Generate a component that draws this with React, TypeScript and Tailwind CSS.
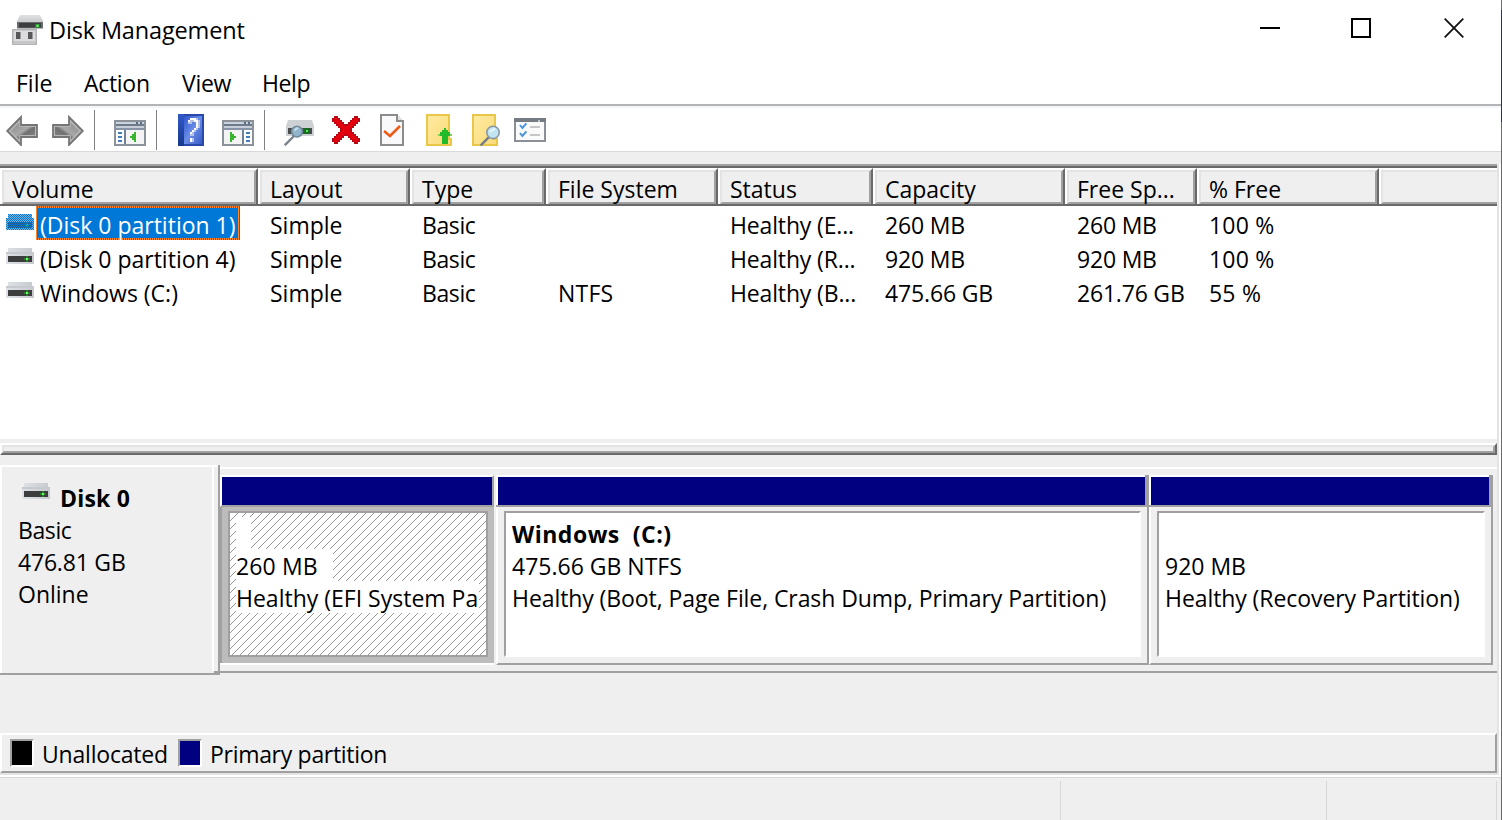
import React from "react";

type Children = { children?: React.ReactNode };

function Glyph({ children }: Children) {
  return (
    <svg viewBox="0 0 16 16" className="block size-8 shrink-0" shapeRendering="crispEdges">
      {children}
    </svg>
  );
}

function AppIcon() {
  return (
    <svg viewBox="0 0 32 32" className="block size-8 shrink-0">
      <defs>
        <linearGradient id="appTop" x1="0" y1="0" x2="0" y2="1">
          <stop offset="0" stopColor="#e0e1e3" />
          <stop offset="1" stopColor="#b9babd" />
        </linearGradient>
      </defs>
      <path d="M8 1H28L31 7V14H5V7Z" fill="url(#appTop)" />
      <rect x="5" y="8" width="26" height="6.5" fill="#6a6c6e" />
      <rect x="7" y="9" width="22" height="4.5" fill="#3b3d3e" />
      <rect x="23.5" y="10" width="4" height="3.5" fill="#2da334" />
      <rect x="24.5" y="11" width="2" height="2" fill="#6cf062" />
      <rect x="0" y="15" width="25" height="16" fill="#b4b4b6" />
      <rect x="1.5" y="16.5" width="22" height="11" fill="#dcdcdf" />
      <rect x="1.5" y="27.5" width="22" height="2.5" fill="#c6c6c9" />
      <rect x="4" y="18" width="4.5" height="7" fill="#58585a" />
      <rect x="16" y="18" width="4.5" height="7" fill="#58585a" />
    </svg>
  );
}

function DriveIcon({ selected = false }: { selected?: boolean }) {
  return (
    <svg viewBox="0 0 28 16" className="block h-4 w-7 shrink-0" shapeRendering="crispEdges">
      <defs>
        <linearGradient id="driveTop">
          <stop offset="0" stopColor="#dee1e5" />
          <stop offset="1" stopColor="#c6c9cd" />
        </linearGradient>
        <pattern id="driveDither" width="2" height="2" patternUnits="userSpaceOnUse">
          <rect width="1" height="1" fill="#0078d7" />
          <rect x="1" y="1" width="1" height="1" fill="#0078d7" />
        </pattern>
      </defs>
      <path d="M2 0H26V4H28V16H0V4H2Z" fill="url(#driveTop)" />
      <rect y="4" width="28" height="2" fill="#c6c9cd" />
      <rect x="2" y="8" width="24" height="6" fill="#3d3d3d" />
      <path d="M18 10H24V12H18ZM20 8H22V14H20Z" fill="#247d27" />
      <rect x="20" y="10" width="2" height="2" fill="#68ff60" />
      {selected && <path d="M2 0H26V4H28V16H0V4H2Z" fill="#0084ea" fillOpacity=".4" />}
      {selected && <path d="M2 0H26V4H28V16H0V4H2Z" fill="url(#driveDither)" />}
    </svg>
  );
}

function ArrowIcon({ forward = false }: { forward?: boolean }) {
  return (
    <svg viewBox="0 0 16 16" className="block size-8 shrink-0">
      <defs>
        <linearGradient id="arrowFill" x1="0" y1="0" x2="1" y2="1">
          <stop offset="0" stopColor="#8b8b8b" />
          <stop offset=".5" stopColor="#a8a8a8" />
          <stop offset=".62" stopColor="#707070" />
          <stop offset="1" stopColor="#8a8a8a" />
        </linearGradient>
      </defs>
      <g transform={forward ? "translate(16 0) scale(-1 1)" : undefined}>
        <path d="M.6 8.5L7.5 1.5V5.5H15.5V11.5H7.5V15.5Z" fill="#b6b6b6" stroke="#757575" strokeWidth=".9" />
        <path d="M2.5 8.5L6.6 4.3V6.5H14.5V10.5H6.6V12.7Z" fill="url(#arrowFill)" />
      </g>
    </svg>
  );
}

function ConsoleIcon({ right = false }: { right?: boolean }) {
  return (
    <Glyph>
      <rect y="3" width="16" height="13" fill="#8b929a" />
      <rect x="1" y="4" width="14" height="1" fill="#cbd3dd" />
      <path d="M1 5H15V6H1Z" fill="#6f7b8a" />
      <path d="M11 4H12V5H11ZM13 4H14V5H13Z" fill="#586b87" />
      <rect x="1" y="6" width="14" height="1" fill="#c5ced9" />
      <rect x="1" y="7" width="14" height="1" fill="#8694a5" />
      {right ? (
        <>
          <rect x="1" y="8" width="9" height="7" fill="#f4f4f4" />
          <rect x="10" y="8" width="1" height="7" fill="#718199" />
          <rect x="11" y="8" width="4" height="7" fill="#fff" />
          <path d="M12 9H14V10H12ZM12 11H14V12H12ZM12 13H14V14H12Z" fill="#3f7fbd" />
          <path d="M4 9H5V10H6V11H7V12H6V13H5V14H4Z" fill="#36b72d" />
        </>
      ) : (
        <>
          <rect x="1" y="8" width="4" height="7" fill="#fff" />
          <path d="M2 9H4V10H2ZM2 11H4V12H2ZM2 13H4V14H2Z" fill="#3f7fbd" />
          <rect x="5" y="8" width="1" height="7" fill="#718199" />
          <rect x="6" y="8" width="9" height="7" fill="#f4f4f4" />
          <path d="M10 9H11V14H10V13H9V12H8V11H9V10H10Z" fill="#36b72d" />
        </>
      )}
    </Glyph>
  );
}

function HelpIcon() {
  return (
    <Glyph>
      <defs>
        <linearGradient id="helpFill" x1="0" y1="0" x2="1" y2="1">
          <stop offset="0" stopColor="#2d56cc" />
          <stop offset=".5" stopColor="#6c8ee8" />
          <stop offset="1" stopColor="#365bc5" />
        </linearGradient>
        <linearGradient id="helpSide" x1="0" y1="0" x2="0" y2="1">
          <stop offset="0" stopColor="#3158c9" />
          <stop offset="1" stopColor="#18398a" />
        </linearGradient>
      </defs>
      <rect x="1" width="13" height="16" fill="#2949aa" />
      <rect x="1" y="0" width="3" height="16" fill="url(#helpSide)" />
      <rect x="4" y="1" width="9" height="14" fill="url(#helpFill)" />
      <path d="M7 2H11V3H12V7H11V8H10V9H9V11H7V9H8V8H9V7H10V4H8V5H6V3H7ZM7 12H9V14H7Z" fill="#b4c2e8" />
      <path d="M7 2H10V3H11V7H10V8H9V9H8V10H7V9H8V8H9V7H10V4H9V3H7V4H6V3H7ZM7 12H8V14H7Z" fill="#fff" />
    </Glyph>
  );
}

function Lens() {
  return (
    <>
      <path d="M4.4 15.8L8.8 11.3" stroke="#727d87" strokeWidth="1.2" />
      <circle cx="10.6" cy="9.2" r="3.1" fill="#c1e4f3" stroke="#8997a5" strokeWidth=".8" />
      <path d="M9.1 8.8L11.7 7.2" stroke="#eaf7fc" strokeWidth="1" />
    </>
  );
}

function DriveSearchIcon() {
  return (
    <svg viewBox="0 0 16 16" className="block size-8 shrink-0">
      <path d="M2 3H14L15 6V11H1V6Z" fill="#ced1d4" />
      <rect x="2" y="7" width="12" height="3" fill="#4a4c50" />
      <rect x="10" y="7" width="3" height="3" fill="#176c21" />
      <rect x="11" y="8" width="1" height="1" fill="#59f24e" />
      <path d="M.4 15.6L5 11" stroke="#79838c" strokeWidth="1.2" />
      <circle cx="6.5" cy="8.8" r="2.7" fill="#91b5cb" stroke="#73899a" strokeWidth=".8" />
      <path d="M5.2 8.2L7 6.9" stroke="#c6dfed" strokeWidth="1" />
    </svg>
  );
}

function DeleteIcon() {
  return (
    <Glyph>
      <path
        d="M2 1H4V2H5V3H6V4H7V5H9V4H10V3H11V2H12V1H14V2H15V4H14V5H13V6H12V7H11V9H12V10H13V11H14V12H15V14H14V15H12V14H11V13H10V12H9V11H7V12H6V13H5V14H4V15H2V14H1V12H2V11H3V10H4V9H5V7H4V6H3V5H2V4H1V2H2Z"
        fill="#b20b13"
      />
      <path
        d="M2 2H4V3H5V4H6V5H7V6H9V5H10V4H11V3H12V2H14V4H13V5H12V6H11V7H10V9H11V10H12V11H13V12H14V14H12V13H11V12H10V11H9V10H7V11H6V12H5V13H4V14H2V12H3V11H4V10H5V9H6V7H5V6H4V5H3V4H2Z"
        fill="#e3000f"
      />
    </Glyph>
  );
}

function CheckDocIcon() {
  return (
    <Glyph>
      <path d="M2 0H11V1H12V2H13V3H14V16H2Z" fill="#8c8c8c" />
      <path d="M3 1H10V4H13V15H3Z" fill="#f9f9fb" />
      <path d="M11 1V3H13V2H12V1Z" fill="#e1e1e1" />
      <path d="M4 8.5L7 11L12 6" stroke="#f15a16" strokeWidth="1.3" fill="none" shapeRendering="auto" />
    </Glyph>
  );
}

function Note() {
  return (
    <>
      <defs>
        <linearGradient id="noteFill" x1="0" y1="0" x2="1" y2="1">
          <stop offset="0" stopColor="#ffeaa0" />
          <stop offset="1" stopColor="#f9db7a" />
        </linearGradient>
      </defs>
      <path d="M2 0H14V12H15V16H2Z" fill="#eac748" />
      <path d="M3 1H13V13H14V15H3Z" fill="url(#noteFill)" />
    </>
  );
}

function NoteUpIcon() {
  return (
    <Glyph>
      <Note />
      <path d="M11 7H12V8H13V9H14V10H15V11H13V15H10V11H8V10H9V9H10V8H11Z" fill="#20ba2b" />
      <path d="M8 10H9V11H8ZM14 10H15V11H14Z" fill="#8bc95c" />
    </Glyph>
  );
}

function NoteSearchIcon() {
  return (
    <Glyph>
      <Note />
      <g shapeRendering="auto" transform="translate(1.9 0)">
        <Lens />
      </g>
    </Glyph>
  );
}

function ChecklistIcon() {
  return (
    <Glyph>
      <rect y="2" width="16" height="12" fill="#8b9096" />
      <rect y="2" width="16" height="2" fill="#757b82" />
      <path d="M12 3H13V4H12Z" fill="#c4c7ca" />
      <rect x="1" y="4" width="14" height="9" fill="#fafafa" />
      <path d="M8 6H13V7H8ZM8 10H13V11H8Z" fill="#c6c6c6" />
      <path
        d="M3 5.5L4.2 7L6.2 4.7M3 9.5L4.2 11L6.2 8.7"
        fill="none"
        stroke="#4793de"
        strokeWidth="1"
        shapeRendering="auto"
      />
    </Glyph>
  );
}

function Separator({ className }: { className: string }) {
  return <div className={`h-10 w-px shrink-0 bg-[#808080] ${className}`} />;
}

function Toolbar() {
  return (
    <div className="flex h-11 items-start border-b border-[#d9d9d9] bg-white pt-0.5 pl-1.5">
      <div className="flex gap-3.5 pt-1">
        <ArrowIcon />
        <ArrowIcon forward />
      </div>
      <Separator className="mr-[19px] ml-2.5" />
      <div className="pt-1">
        <ConsoleIcon />
      </div>
      <Separator className="mr-[19px] ml-2.5" />
      <div className="flex gap-3.5 pt-1">
        <HelpIcon />
        <ConsoleIcon right />
      </div>
      <Separator className="mr-[19px] ml-2.5" />
      <div className="flex gap-3.5 pt-1">
        <DriveSearchIcon />
        <DeleteIcon />
        <CheckDocIcon />
        <NoteUpIcon />
        <NoteSearchIcon />
        <ChecklistIcon />
      </div>
    </div>
  );
}

function TitleBar() {
  return (
    <header className="flex h-[62px] items-start bg-white">
      <div className="flex w-full items-start pt-3.5 pl-3">
        <AppIcon />
        <h1 className="ml-[5px] text-[23.5px] leading-[33px] tracking-[-0.15px]">Disk Management</h1>
      </div>
      <div className="mr-[37px] flex gap-[71px] pt-[18px]">
        <svg viewBox="0 0 20 20" className="size-5" shapeRendering="crispEdges">
          <path d="M0 10H20" stroke="#000" strokeWidth="2" />
        </svg>
        <svg viewBox="0 0 20 20" className="size-5" shapeRendering="crispEdges">
          <rect x="1" y="1" width="18" height="18" fill="none" stroke="#000" strokeWidth="2" />
        </svg>
        <svg viewBox="0 0 20 20" className="ml-0.5 size-5">
          <path d="M.7 .7L19.3 19.3M19.3 .7L.7 19.3" stroke="#111" strokeWidth="1.8" />
        </svg>
      </div>
    </header>
  );
}

function MenuBar() {
  return (
    <nav className="flex h-[46px] border-b-2 border-[#f2f6fa] bg-white">
      <div className="flex h-11 w-full border-b-2 border-[#b4b4b4] pt-[5px] leading-[33px]">
        <span className="ml-4 w-[68px]">File</span>
        <span className="w-[98px] tracking-[-0.3px]">Action</span>
        <span className="w-20 tracking-[-0.3px]">View</span>
        <span className="tracking-[-0.4px]">Help</span>
      </div>
    </nav>
  );
}

const columns = [
  { label: "Volume", width: "w-[258px]", text: "" },
  { label: "Layout", width: "w-[152px]", text: "" },
  { label: "Type", width: "w-[136px]", text: "tracking-[-0.4px]" },
  { label: "File System", width: "w-[172px]", text: "tracking-[0.2px]" },
  { label: "Status", width: "w-[155px]", text: "tracking-[-0.15px]" },
  { label: "Capacity", width: "w-[192px]", text: "tracking-[-0.15px]" },
  { label: "Free Sp...", width: "w-[132px]", text: "tracking-[-0.2px]" },
  { label: "% Free", width: "w-[182px]", text: "tracking-[0.2px]" },
];

const volumes = [
  ["(Disk 0 partition 1)", "Simple", "Basic", "", "Healthy (E...", "260 MB", "260 MB", "100 %"],
  ["(Disk 0 partition 4)", "Simple", "Basic", "", "Healthy (R...", "920 MB", "920 MB", "100 %"],
  ["Windows (C:)", "Simple", "Basic", "NTFS", "Healthy (B...", "475.66 GB", "261.76 GB", "55 %"],
];

function VolumeList() {
  return (
    <section className="h-[275px] border-t-2 border-[#a0a0a0] bg-white">
      <div className="flex h-10 border-y-2 border-[#696969] bg-[#efefef]">
        {columns.map((column) => (
          <div key={column.label} className={`h-9 shrink-0 border-t-2 border-r-2 border-l-2 border-t-white border-r-[#696969] border-l-white ${column.width}`}>
            <div className="h-[34px] border-2 border-t-[#e3e3e3] border-r-[#a0a0a0] border-b-[#a0a0a0] border-l-[#e3e3e3] pl-2 leading-[35px] whitespace-nowrap">
              {column.label}
            </div>
          </div>
        ))}
        <div className="h-9 flex-1 border-t-2 border-l-2 border-white">
          <div className="h-[34px] border-t-2 border-b-2 border-l-2 border-t-[#e3e3e3] border-b-[#a0a0a0] border-l-[#e3e3e3]" />
        </div>
      </div>
      {volumes.map((volume, row) => (
        <div key={volume[0]} className="flex h-[34px] leading-[39px] whitespace-nowrap">
          {volume.map((value, index) =>
            index === 0 ? (
              <div key={index} className="flex w-[258px] shrink-0 pl-1.5">
                <div className="w-[30px] pt-2">
                  <DriveIcon selected={row === 0} />
                </div>
                {row === 0 ? (
                  <div className="h-[34px] w-[204px] bg-[repeating-linear-gradient(90deg,#ff8728_0_1px,#0078d7_1px_2px)] p-0.5 text-white">
                    <div className="h-[30px] bg-[#0078d7] pl-0.5 leading-[35px]">{value}</div>
                  </div>
                ) : (
                  <div className="pl-1">{value}</div>
                )}
              </div>
            ) : (
              <div key={index} className={`shrink-0 pl-3 ${columns[index].width} ${columns[index].text}`}>
                {value}
              </div>
            ),
          )}
        </div>
      ))}
    </section>
  );
}

function Splitter() {
  return (
    <div className="h-4 border-t-4 border-[#efefef]">
      <div className="h-3 border-2 border-t-white border-r-[#696969] border-b-[#696969] border-l-white">
        <div className="h-2 border-2 border-t-[#e3e3e3] border-r-[#a0a0a0] border-b-[#a0a0a0] border-l-[#e3e3e3] bg-[#efefef]" />
      </div>
    </div>
  );
}

function EfiPartition() {
  return (
    <div className="w-[276px] shrink-0">
      <div className="h-8 w-[274px] border-2 border-t-white border-r-[#a0a0a0] border-b-[#a0a0a0] border-l-white bg-[#000080]" />
      <div className="h-[156px] w-[274px] border-l-2 border-[#a0a0a0] bg-[#bcbcbc] pt-1 pl-1.5">
        <div className="grid h-[146px] w-[260px] border-2 border-[#a0a0a0] bg-white">
          <svg className="col-start-1 row-start-1 h-[142px] w-64" shapeRendering="crispEdges">
            <defs>
              <pattern id="hatch" width="8" height="8" patternUnits="userSpaceOnUse">
                <path
                  d="M7 0h1v1h-1zM6 1h1v1h-1zM5 2h1v1h-1zM4 3h1v1h-1zM3 4h1v1h-1zM2 5h1v1h-1zM1 6h1v1h-1zM0 7h1v1h-1z"
                  fill="#969696"
                />
              </pattern>
            </defs>
            <rect width="256" height="142" fill="url(#hatch)" />
          </svg>
          <div className="z-10 col-start-1 row-start-1 flex flex-col items-start pt-1 pl-1.5 leading-[34px] whitespace-nowrap">
            <div className="h-8 w-[15px] bg-white" />
            <div className="h-8 w-[97px] bg-white tracking-[0.15px]">260 MB</div>
            <div className="h-8 w-[243px] overflow-hidden bg-white">Healthy (EFI System Par</div>
          </div>
        </div>
      </div>
      <div className="h-0.5 w-[274px] bg-white" />
    </div>
  );
}

function Partition({ name, size, status, className }: { name: string; size: string; status: string; className: string }) {
  return (
    <div className={`shrink-0 ${className}`}>
      <div className="flex h-8 border-b-2 border-[#a0a0a0]">
        <div className="h-[30px] flex-1 border-t-2 border-l-2 border-white bg-[#000080]" />
        <div className="h-[30px] w-1 bg-[#a0a0a0]" />
      </div>
      <div className="h-[158px] border-r-2 border-b-2 border-l-2 border-r-[#a0a0a0] border-b-[#a0a0a0] border-l-white bg-[#efefef] pt-1 pr-1.5 pl-1.5">
        <div className="h-[146px] border-2 border-t-[#a0a0a0] border-r-white border-b-white border-l-[#a0a0a0] bg-white pt-1 pl-1.5 leading-[34px] whitespace-pre">
          <div className="h-8 font-bold tracking-[0.5px]">{name}</div>
          <div className="h-8">{size}</div>
          <div className="h-8 tracking-[-0.08px]">{status}</div>
        </div>
      </div>
    </div>
  );
}

function DiskView() {
  return (
    <section className="flex h-[278px] bg-[#efefef] pt-2.5">
      <div className="h-[210px] w-[220px] shrink-0 border-r-2 border-b-2 border-[#a0a0a0]">
        <div className="flex h-52 border-t-2 border-l-2 border-white">
          <div className="w-[210px] pt-4 pl-4">
            <div className="flex h-[31px]">
              <div className="pl-1">
                <DriveIcon />
              </div>
              <b className="pl-2.5 leading-[31px] tracking-[0.2px]">Disk 0</b>
            </div>
            <div className="leading-8">
              <div className="tracking-[-0.4px]">Basic</div>
              <div className="tracking-[-0.2px]">476.81 GB</div>
              <div>Online</div>
            </div>
          </div>
          <div className="h-[204px] w-0.5 bg-white" />
          <div className="h-[206px] w-1 self-end border-b-2 border-[#a0a0a0]" />
        </div>
      </div>
      <div className="mt-0.5 flex h-[206px] flex-1 border-t-2 border-b-2 border-t-white border-b-[#a0a0a0] pt-1.5">
        <EfiPartition />
        <Partition className="w-[653px]" name="Windows  (C:)" size="475.66 GB NTFS" status="Healthy (Boot, Page File, Crash Dump, Primary Partition)" />
        <Partition className="w-[344px]" name=" " size="920 MB" status="Healthy (Recovery Partition)" />
      </div>
    </section>
  );
}

function Swatch({ className }: { className: string }) {
  return <div className={`h-7 w-6 border-2 border-t-[#a0a0a0] border-r-white border-b-white border-l-[#a0a0a0] ${className}`} />;
}

function Legend() {
  return (
    <footer className="flex h-10 border-2 border-t-white border-r-[#a0a0a0] border-b-[#a0a0a0] border-l-white bg-[#efefef] pt-1 pl-2">
      <Swatch className="bg-black" />
      <span className="ml-2 w-[136px] leading-[31px] tracking-[-0.2px]">Unallocated</span>
      <Swatch className="bg-[#000080]" />
      <span className="ml-2 leading-[31px] tracking-[-0.3px]">Primary partition</span>
    </footer>
  );
}

export default function App() {
  return (
    <div className="flex h-[820px] w-[1502px] overflow-hidden bg-[#efefef] font-['Open_Sans','Noto_Sans',sans-serif] text-[23px] text-black">
      <div className="w-[1501px] shrink-0">
        <TitleBar />
        <MenuBar />
        <Toolbar />
        <div className="h-3 bg-[#efefef]" />
        <div className="border-r-2 border-b-2 border-white">
          <main className="border-r-2 border-b-2 border-[#e3e3e3]">
            <VolumeList />
            <Splitter />
            <DiskView />
            <Legend />
          </main>
        </div>
        <div className="flex h-[43px] border-t border-[#d7d7d7] pt-[3px]">
          <div className="w-[1061px] border-r border-[#d7d7d7]" />
          <div className="w-[266px] border-r border-[#d7d7d7]" />
          <div className="w-[170px] border-r border-[#d7d7d7]" />
        </div>
      </div>
      <div className="w-px bg-[#6b6b6b] pt-2.5">
        <div className="h-28 bg-[#26345f]" />
      </div>
    </div>
  );
}
